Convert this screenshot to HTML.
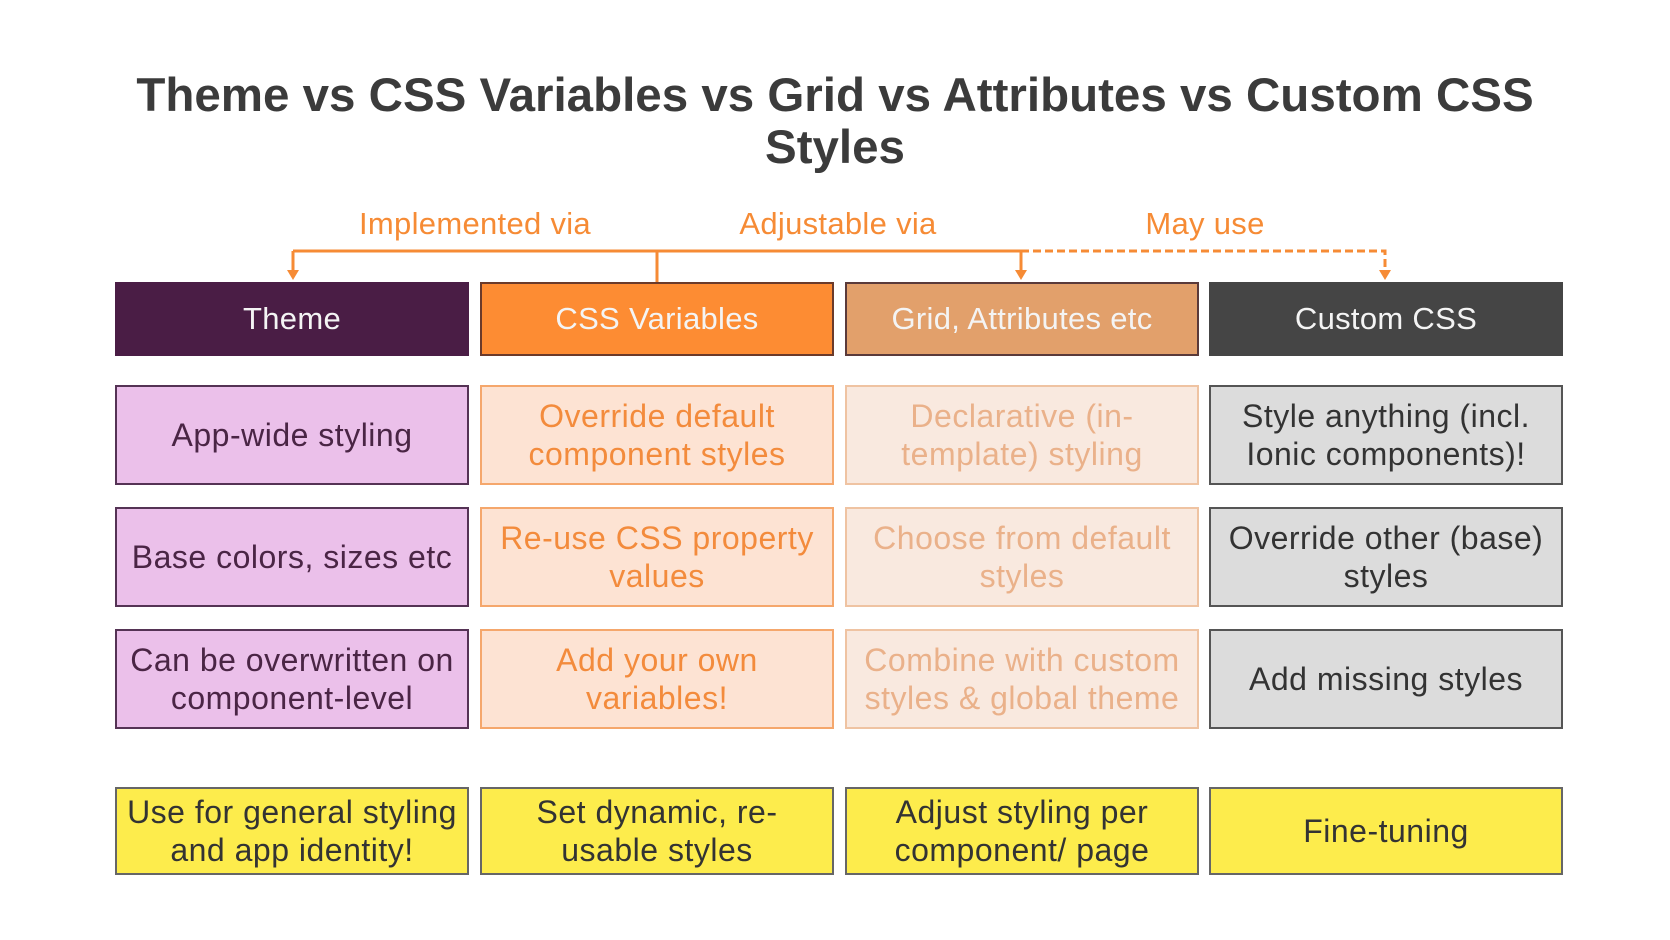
<!DOCTYPE html>
<html><head><meta charset="utf-8"><style>
body{margin:0;width:1670px;height:940px;background:#fff;position:relative;overflow:hidden;font-family:"Liberation Sans","DejaVu Sans",sans-serif}
.t{position:absolute;left:0;width:1670px;text-align:center;font-weight:bold;color:#3b3b3b;font-size:47.5px;line-height:52px;top:70px}
.c{position:absolute;box-sizing:border-box;width:354px;display:flex;align-items:center;justify-content:center;text-align:center;font-size:32px;letter-spacing:0.5px;line-height:38px;border:2px solid}
.h{height:74px;top:282px;color:#f4f4f4;font-size:31px;letter-spacing:0.3px}
.lab{position:absolute;top:206px;font-size:31px;color:#f68b35;transform:translateX(-50%);white-space:nowrap;letter-spacing:0.3px}
</style></head><body>
<div class="t">Theme vs CSS Variables vs Grid vs Attributes vs Custom CSS<br>Styles</div>
<div class="lab" style="left:475px">Implemented via</div>
<div class="lab" style="left:838px">Adjustable via</div>
<div class="lab" style="left:1205px">May use</div>
<svg style="position:absolute;left:0;top:0" width="1670" height="300">
<g stroke="#f68b35" stroke-width="3" fill="none">
<path d="M293 251H1021M293 251V274M657 251V284M1021 251V274"/>
<path d="M1021 251H1385V274" stroke-dasharray="8 4"/>
</g>
<g fill="#f68b35"><path d="M287 270h12l-6 10z"/><path d="M1015 270h12l-6 10z"/><path d="M1379 270h12l-6 10z"/></g>
</svg>
<div class="c h" style="left:115px;background:#4a1d45;border-color:#4a1d45">Theme</div>
<div class="c h" style="left:480px;background:#fd8c33;border-color:#6b3a2a">CSS Variables</div>
<div class="c h" style="left:845px;background:#e2a06b;border-color:#5a3a3a">Grid, Attributes etc</div>
<div class="c h" style="left:1209px;background:#454545;border-color:#454545">Custom CSS</div>

<div class="c" style="left:115px;top:385px;height:100px;background:#ebc0ea;border-color:#553355;color:#4a2545">App-wide styling</div>
<div class="c" style="left:480px;top:385px;height:100px;background:#fde3d3;border-color:#f5a76c;color:#f38b3c">Override default<br>component styles</div>
<div class="c" style="left:845px;top:385px;height:100px;background:#f9e9df;border-color:#efc3a2;color:#eab18a">Declarative (in-<br>template) styling</div>
<div class="c" style="left:1209px;top:385px;height:100px;background:#dcdcdc;border-color:#555;color:#333">Style anything (incl.<br>Ionic components)!</div>

<div class="c" style="left:115px;top:507px;height:100px;background:#ebc0ea;border-color:#553355;color:#4a2545">Base colors, sizes etc</div>
<div class="c" style="left:480px;top:507px;height:100px;background:#fde3d3;border-color:#f5a76c;color:#f38b3c">Re-use CSS property<br>values</div>
<div class="c" style="left:845px;top:507px;height:100px;background:#f9e9df;border-color:#efc3a2;color:#eab18a">Choose from default<br>styles</div>
<div class="c" style="left:1209px;top:507px;height:100px;background:#dcdcdc;border-color:#555;color:#333">Override other (base)<br>styles</div>

<div class="c" style="left:115px;top:629px;height:100px;background:#ebc0ea;border-color:#553355;color:#4a2545">Can be overwritten on<br>component-level</div>
<div class="c" style="left:480px;top:629px;height:100px;background:#fde3d3;border-color:#f5a76c;color:#f38b3c">Add your own<br>variables!</div>
<div class="c" style="left:845px;top:629px;height:100px;background:#f9e9df;border-color:#efc3a2;color:#eab18a">Combine with custom<br>styles &amp; global theme</div>
<div class="c" style="left:1209px;top:629px;height:100px;background:#dcdcdc;border-color:#555;color:#333">Add missing styles</div>

<div class="c" style="left:115px;top:787px;height:88px;background:#fdec4c;border-color:#666;color:#333">Use for general styling<br>and app identity!</div>
<div class="c" style="left:480px;top:787px;height:88px;background:#fdec4c;border-color:#666;color:#333">Set dynamic, re-<br>usable styles</div>
<div class="c" style="left:845px;top:787px;height:88px;background:#fdec4c;border-color:#666;color:#333">Adjust styling per<br>component/ page</div>
<div class="c" style="left:1209px;top:787px;height:88px;background:#fdec4c;border-color:#666;color:#333">Fine-tuning</div>
</body></html>
